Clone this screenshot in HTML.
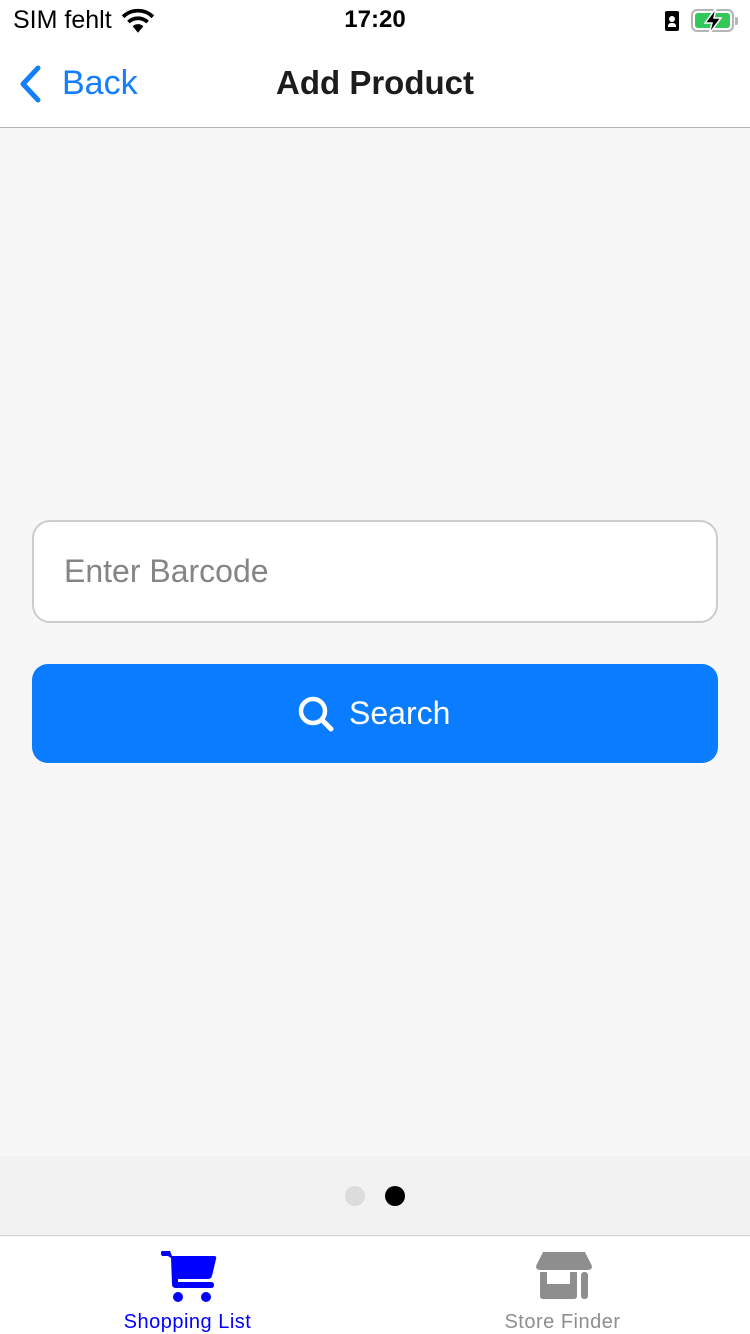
<!DOCTYPE html>
<html><head><meta charset="utf-8"><style>
*{margin:0;padding:0;box-sizing:border-box}
body{width:750px;height:1334px;position:relative;background:#f7f7f7;font-family:"Liberation Sans",sans-serif;overflow:hidden}
.abs{position:absolute}
</style></head><body>
<div class="abs" style="left:0;top:0;width:750px;height:128px;background:#fff;border-bottom:1px solid #b2b2b2"></div>
<div class="abs" style="left:13px;top:6px;font-size:25px;color:#000">SIM fehlt</div>
<svg class="abs" style="left:121px;top:8px" width="34" height="26" viewBox="0 0 32 24"><path d="M2 8 A20 20 0 0 1 30 8" stroke="#000" stroke-width="3.5" fill="none"/><path d="M7 13 A13 13 0 0 1 25 13" stroke="#000" stroke-width="3.5" fill="none"/><path d="M16 23 L11 17 A7 7 0 0 1 21 17 Z" fill="#000"/></svg>
<div class="abs" style="left:0;width:750px;text-align:center;top:6px;font-size:24px;font-weight:bold;color:#000">17:20</div>
<div class="abs" style="left:665px;top:11px;width:14px;height:20px;background:#000;border-radius:2px"><div class="abs" style="left:4px;top:5px;width:6px;height:6px;background:#fff;border-radius:50%"></div><div class="abs" style="left:3px;top:12px;width:8px;height:4px;background:#fff;border-radius:3px 3px 0 0"></div></div>
<div class="abs" style="left:691px;top:9px;width:43px;height:23px;border:2px solid #b5b5b5;border-radius:6px;padding:2px"><div style="width:100%;height:100%;background:#34c759;border-radius:3px"></div></div>
<div class="abs" style="left:735px;top:17px;width:3px;height:8px;background:#b5b5b5;border-radius:0 2px 2px 0"></div>
<svg class="abs" style="left:700px;top:7px" width="26" height="28" viewBox="0 0 26 28"><path d="M16 1 L5 16 L12 16 L9 27 L21 11 L14 11 Z" fill="#000" stroke="#fff" stroke-width="1.5"/></svg>
<svg class="abs" style="left:16px;top:64px" width="28" height="40" viewBox="0 0 28 40"><path d="M22 4 L7 20 L22 36" stroke="#157efb" stroke-width="5" fill="none" stroke-linecap="round" stroke-linejoin="round"/></svg>
<div class="abs" style="left:62px;top:64px;font-size:34px;color:#157efb">Back</div>
<div class="abs" style="left:0;width:750px;text-align:center;top:64px;font-size:33px;font-weight:bold;color:#1c1c1c">Add Product</div>
<div class="abs" style="left:32px;top:520px;width:686px;height:103px;background:#fff;border:2px solid #ccc;border-radius:18px"></div>
<div class="abs" style="left:64px;top:553px;font-size:32px;color:#858585">Enter Barcode</div>
<div class="abs" style="left:32px;top:664px;width:686px;height:99px;background:#0a7cff;border-radius:16px"></div>
<svg class="abs" style="left:296px;top:694px" width="40" height="40" viewBox="0 0 40 40"><circle cx="17" cy="17" r="12" stroke="#fff" stroke-width="4.5" fill="none"/><path d="M26 26 L35 35" stroke="#fff" stroke-width="5" stroke-linecap="round"/></svg>
<div class="abs" style="left:349px;top:695px;font-size:32px;color:#fff">Search</div>
<div class="abs" style="left:0;top:1156px;width:750px;height:80px;background:#f2f2f2;border-bottom:1px solid #d6d6d6"></div>
<div class="abs" style="left:345px;top:1186px;width:20px;height:20px;border-radius:50%;background:#dcdcdc"></div>
<div class="abs" style="left:385px;top:1186px;width:20px;height:20px;border-radius:50%;background:#000"></div>
<div class="abs" style="left:0;top:1237px;width:750px;height:97px;background:#fff"></div>
<svg class="abs" style="left:158px;top:1246px" width="60" height="60" viewBox="0 0 60 60"><path d="M4 5 L12 5 L14 10 L56 10 Q59 10 58 13 L54 30 Q53 33 50 33 L20 33 L20 36 L53 36 Q56 36 56 39 Q56 42 53 42 L18 42 Q14 42 14 38 L13 12 L10 10 L5 10 Q3 10 3 7.5 Q3 5 4 5 Z" fill="#0000ff"/><circle cx="20" cy="51" r="5" fill="#0000ff"/><circle cx="48" cy="51" r="5" fill="#0000ff"/></svg>
<div class="abs" style="left:0;width:375px;text-align:center;top:1311px;font-size:20px;color:#0000ff;letter-spacing:.5px">Shopping List</div>
<svg class="abs" style="left:535px;top:1250px" width="58" height="56" viewBox="0 0 58 56"><path d="M8 2 L50 2 L57 16 Q57 20 53 20 L5 20 Q1 20 1 16 Z" fill="#8e8e8e"/><path d="M5 22 L12 22 L12 34 L35 34 L35 22 L42 22 L42 46 Q42 49 39 49 L8 49 Q5 49 5 46 Z" fill="#8e8e8e"/><rect x="46" y="22" width="7" height="27" rx="3" fill="#8e8e8e"/></svg>
<div class="abs" style="left:375px;width:375px;text-align:center;top:1311px;font-size:20px;color:#8e8e8e;letter-spacing:.5px">Store Finder</div>
</body></html>
